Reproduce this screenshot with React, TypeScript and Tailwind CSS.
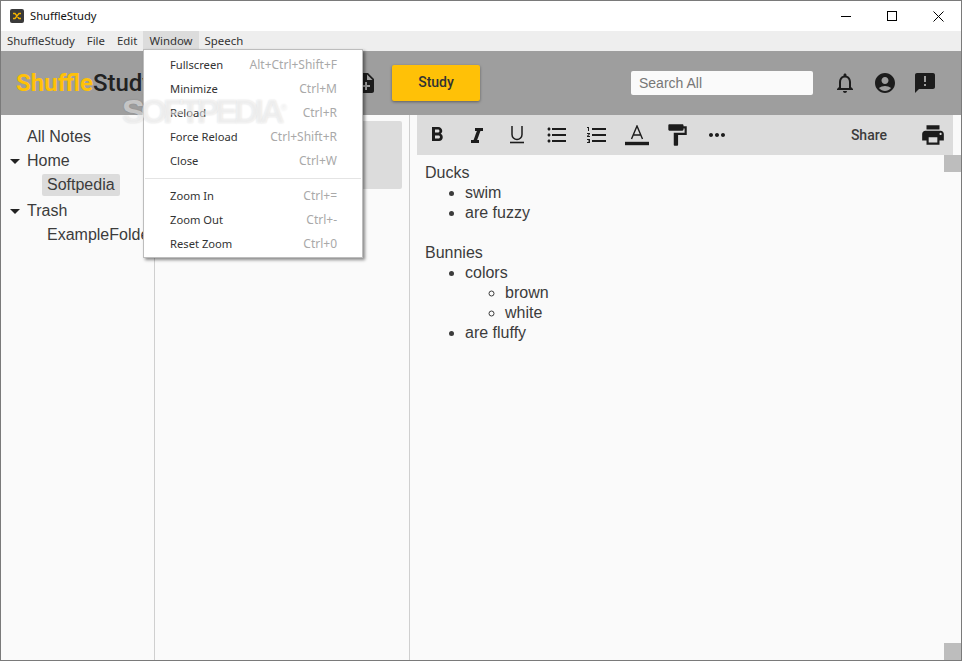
import {
  MdAccountCircle,
  MdAnnouncement,
  MdFormatBold,
  MdFormatListBulleted,
  MdFormatListNumbered,
  MdFormatPaint,
  MdMoreHoriz,
  MdNoteAdd,
  MdNotificationsNone,
  MdPrint,
} from "react-icons/md";

const menuItems = ["ShuffleStudy", "File", "Edit", "Window", "Speech"];

const windowMenu = [
  [
    { label: "Fullscreen", keys: "Alt+Ctrl+Shift+F" },
    { label: "Minimize", keys: "Ctrl+M" },
    { label: "Reload", keys: "Ctrl+R" },
    { label: "Force Reload", keys: "Ctrl+Shift+R" },
    { label: "Close", keys: "Ctrl+W" },
  ],
  [
    { label: "Zoom In", keys: "Ctrl+=" },
    { label: "Zoom Out", keys: "Ctrl+-" },
    { label: "Reset Zoom", keys: "Ctrl+0" },
  ],
];

function Caret() {
  return <span className="w-0 h-0 border-x-[5px] border-x-transparent border-t-[5px] border-t-[#222] mr-[7px]" />;
}

function ToolButton({ children }: { children: React.ReactNode }) {
  return <div className="w-10 h-10 shrink-0 flex items-center justify-center">{children}</div>;
}

function WindowMenu() {
  return (
    <div className="absolute left-[142px] top-[48px] z-10 w-[220px] h-[209px] bg-white border border-[#bdbdbd] shadow-[2px_2px_3px_rgba(0,0,0,0.45)] py-[3px] font-['Noto_Sans',sans-serif] text-[11.2px]">
      {windowMenu.map((group, i) => (
        <div key={i}>
          {i > 0 && <div className="h-px bg-[#e4e4e4] mx-px my-[5px]" />}
          {group.map((item) => (
            <div key={item.label} className="h-6 flex items-center justify-between pl-[26px] pr-[25px]">
              <span className="text-[#333]">{item.label}</span>
              <span className="text-[#a9a9a9] text-[12px]">{item.keys}</span>
            </div>
          ))}
        </div>
      ))}
    </div>
  );
}

export default function App() {
  return (
    <div className="relative w-[962px] h-[661px] overflow-hidden flex flex-col bg-white border border-[#7a7a7a] font-['Liberation_Sans',sans-serif] text-[#3c3c3c]">
      {/* title bar */}
      <div className="h-[30px] shrink-0 flex items-center pl-[9px] font-['Noto_Sans',sans-serif] text-[11.2px] text-[#111]">
        <div className="w-[14px] h-[14px] rounded-[2px] bg-[#3a3a3a] flex items-center justify-center mr-[6px]">
          <svg width="10" height="10" viewBox="0 0 10 10" fill="none" stroke="#f5b400" strokeWidth="1.3">
            <path d="M1 2.5h2l4 5h2M1 7.5h2l4-5h2" />
          </svg>
        </div>
        <span>ShuffleStudy</span>
        <div className="ml-auto flex items-center text-black">
          <div className="w-[46px] h-[30px] flex items-center justify-center">
            <div className="w-[10px] h-px bg-black" />
          </div>
          <div className="w-[46px] h-[30px] flex items-center justify-center">
            <div className="w-[10px] h-[10px] border border-black" />
          </div>
          <div className="w-[46px] h-[30px] flex items-center justify-center">
            <svg width="11" height="11" viewBox="0 0 11 11" stroke="black" strokeWidth="1">
              <path d="M0.5 0.5l10 10M10.5 0.5l-10 10" />
            </svg>
          </div>
        </div>
      </div>

      {/* menu bar */}
      <div className="h-5 shrink-0 flex bg-[#eeeeee] font-['Noto_Sans',sans-serif] text-[11.4px] text-[#333]">
        {menuItems.map((item) => (
          <div key={item} className={`h-5 px-[6px] flex items-center ${item === "Window" ? "bg-[#dcdcdc]" : ""}`}>
            {item}
          </div>
        ))}
      </div>

      {/* header */}
      <div className="h-16 shrink-0 bg-[#9e9e9e] flex items-center pl-[15px] font-['Roboto',sans-serif]">
        <div className="w-[339px] text-2xl leading-none whitespace-nowrap">
          <span className="font-bold text-[#ffc107]">Shuffle</span>
          <span className="font-medium text-[#222]">Study</span>
        </div>
        <MdNoteAdd className="text-[#1c1c1c] text-[24px] mr-[14px] -ml-[1px]" />
        <button className="w-[88px] h-9 rounded-[2px] bg-[#ffc107] text-sm font-medium text-[#333] pb-[2px] shadow-[0_1px_3px_rgba(0,0,0,0.4)]">
          Study
        </button>
        <div className="ml-[151px] w-[182px] h-6 rounded-[2px] bg-[#fafafa] pl-2 flex items-center font-['Liberation_Sans',sans-serif] text-sm text-[#777]">
          Search All
        </div>
        <MdNotificationsNone className="ml-[20px] text-[24px] text-[#1c1c1c]" />
        <MdAccountCircle className="ml-[16px] text-[24px] text-[#1c1c1c]" />
        <MdAnnouncement className="ml-[16px] text-[24px] text-[#1c1c1c]" />
      </div>

      {/* body */}
      <div className="flex-1 flex min-h-0 bg-[#fafafa]">
        <div className="w-[154px] shrink-0 border-r border-[#cfcfcf] pt-[12px] overflow-hidden whitespace-nowrap text-base leading-5">
          <div className="h-5 pl-[26px] mb-1">All Notes</div>
          <div className="h-5 pl-[9px] mb-[3px] flex items-center"><Caret />Home</div>
          <div className="pl-[41px] h-[22px] mb-[5px]">
            <span className="inline-block h-[22px] rounded-[2px] bg-[#dcdcdc] px-[5px] leading-[22px]">Softpedia</span>
          </div>
          <div className="h-5 pl-[9px] mb-1 flex items-center"><Caret />Trash</div>
          <div className="h-5 pl-[46px]">ExampleFolder</div>
        </div>

        <div className="w-[255px] shrink-0 border-r border-[#cfcfcf] pt-[6px] pl-2 pr-[7px]">
          <div className="h-[68px] rounded-[2px] bg-[#dcdcdc]" />
        </div>

        <div className="relative flex-1 min-w-0">
          <div className="ml-[7px] mr-2 h-10 bg-[#dcdcdc] flex items-center text-[#1c1c1c] font-['Roboto',sans-serif]">
            <ToolButton><MdFormatBold className="text-[24px] -ml-[1px]" /></ToolButton>
            <ToolButton>
              <svg width="14" height="15" viewBox="0 0 14 15" fill="none" stroke="#1c1c1c">
                <path d="M5 1.5h8M1 13.5h8" strokeWidth="3" />
                <path d="M9 2L5 13" strokeWidth="3.4" />
              </svg>
            </ToolButton>
            <ToolButton>
              <svg width="14" height="18" viewBox="0 0 14 18" fill="none" stroke="#1c1c1c">
                <path d="M2 0v8.5a5 5 0 0 0 10 0V0" strokeWidth="1.5" />
                <path d="M0 16.5h14" strokeWidth="1.6" />
              </svg>
            </ToolButton>
            <ToolButton><MdFormatListBulleted className="text-[24px]" /></ToolButton>
            <ToolButton><MdFormatListNumbered className="text-[24px]" /></ToolButton>
            <ToolButton>
              <svg width="24" height="21" viewBox="0 0 24 21" fill="none" stroke="#1c1c1c">
                <path d="M6.5 14L12 1l5.500 13M8.300 10h7.400" strokeWidth="1.4" />
                <path d="M0 18.500h24" strokeWidth="3.400" />
              </svg>
            </ToolButton>
            <ToolButton><MdFormatPaint className="text-[26px]" /></ToolButton>
            <ToolButton><MdMoreHoriz className="text-[24px]" /></ToolButton>
            <span className="ml-auto mr-[26px] text-sm font-medium text-[#3c3c3c]">Share</span>
            <ToolButton><MdPrint className="text-[26px]" /></ToolButton>
          </div>
          <div className="pt-2 pl-[15px] text-base leading-5 [&_ul]:list-disc [&_ul]:pl-10 [&_ul_ul]:list-[circle]">
            <div>Ducks</div>
            <ul>
              <li>swim</li>
              <li>are fuzzy</li>
            </ul>
            <div className="h-5" />
            <div>Bunnies</div>
            <ul>
              <li>colors
                <ul>
                  <li>brown</li>
                  <li>white</li>
                </ul>
              </li>
              <li>are fluffy</li>
            </ul>
          </div>
          {/* scroll thumbs */}
          <div className="absolute right-0 top-10 w-[17px] h-[17px] bg-[#bdbdbd]" />
          <div className="absolute right-0 bottom-0 w-[17px] h-[17px] bg-[#bdbdbd]" />
        </div>
      </div>

      <WindowMenu />
      <div className="absolute left-[121px] top-[93px] z-20 text-[34px] leading-none font-bold tracking-[-4px] text-white/50 [text-shadow:0_0_2px_rgba(0,0,0,0.14)] pointer-events-none">
        SOFTPEDIA<span className="align-super text-[9px] font-normal tracking-normal">®</span>
      </div>
    </div>
  );
}
